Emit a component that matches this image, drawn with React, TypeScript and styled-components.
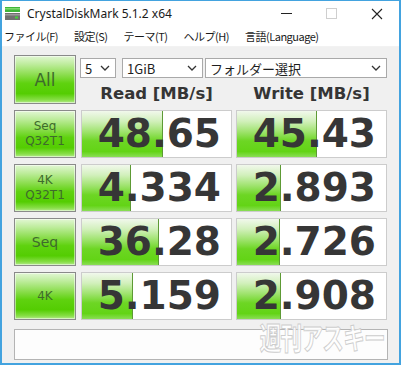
import React from 'react';
import styled, { createGlobalStyle } from 'styled-components';

const GlobalStyle = createGlobalStyle`
  html, body {
    margin: 0;
    padding: 0;
    background: #ffffff;
  }
`;

const Window = styled.div`
  position: relative;
  box-sizing: border-box;
  width: 401px;
  height: 365px;
  border: 2px solid #43a3df;
  border-top-width: 1px;
  background: #f0f0f0;
  display: flex;
  flex-direction: column;
  overflow: hidden;
`;

const TitleBar = styled.div`
  height: 25px;
  background: #ffffff;
  display: flex;
  align-items: center;
  padding-left: 2px;
  font-family: 'Noto Sans', 'Open Sans', sans-serif;
  font-size: 12px;
  color: #1a1a1a;
`;

const TitleText = styled.span`
  margin-left: 6px;
  flex: 1;
`;

const CtrlBox = styled.div`
  width: 45px;
  height: 25px;
  display: flex;
  align-items: center;
  justify-content: center;
`;

const MenuBar = styled.div`
  height: 20px;
  background: #ffffff;
  border-bottom: 1px solid #f2f2f2;
  display: flex;
  align-items: center;
  gap: 16px;
  padding-left: 2px;
  font-family: 'Noto Sans CJK JP', 'Noto Sans', sans-serif;
  font-size: 11px;
  letter-spacing: -0.5px;
  color: #1a1a1a;
`;

const Content = styled.div`
  flex: 1;
  padding: 8px 0 0 12px;
`;

const Grid = styled.div`
  display: grid;
  grid-template-columns: 63px 151px 151px;
  grid-template-rows: 49px 48px 48px 48px 48px;
  column-gap: 4px;
  row-gap: 6px;
`;

const GreenButton = styled.div<{ $size?: number }>`
  box-sizing: border-box;
  width: 62px;
  border: 1px solid #8a8a8a;
  box-shadow: inset 0 0 0 1px rgba(255, 255, 255, 0.5);
  background: linear-gradient(
    to bottom,
    #e2f7d4 0%,
    #bdec9b 18%,
    #8bdd4e 40%,
    #5fd20f 58%,
    #54cd02 80%,
    #86de45 93%,
    #b4ea8c 100%
  );
  display: flex;
  flex-direction: column;
  align-items: center;
  justify-content: center;
  font-family: 'DejaVu Sans', Verdana, sans-serif;
  font-size: ${(p) => p.$size || 12}px;
  line-height: ${(p) => (p.$size ? p.$size + 3 : 15)}px;
  color: #3e6b2c;
`;

const TopPanel = styled.div`
  grid-column: 2 / span 2;
  display: flex;
  flex-direction: column;
`;

const SelectRow = styled.div`
  display: flex;
  margin: 3px 0 0 -1px;
  height: 20px;
`;

const Select = styled.div<{ $w: number; $gap: number }>`
  box-sizing: border-box;
  width: ${(p) => p.$w}px;
  margin-right: ${(p) => p.$gap}px;
  height: 20px;
  border: 1px solid #a9a9a9;
  background: #ffffff;
  display: flex;
  align-items: center;
  justify-content: space-between;
  padding: 0 5px 0 4px;
  font-family: 'Noto Sans CJK JP', 'DejaVu Sans', sans-serif;
  font-size: 13px;
  color: #1e1e1e;
`;

const Headers = styled.div`
  display: grid;
  grid-template-columns: 151px 151px;
  column-gap: 4px;
  margin-top: 6px;
`;

const Header = styled.div`
  text-align: center;
  font-family: 'DejaVu Sans', Verdana, sans-serif;
  font-weight: bold;
  font-size: 16.5px;
  line-height: 20px;
  color: #353535;
`;

const ValueBox = styled.div`
  box-sizing: border-box;
  border: 1px solid #cccccc;
  background:
    linear-gradient(#5d9a35, #5d9a35) var(--fill) 0 / 1px 100% no-repeat,
    linear-gradient(
        to bottom,
        #f1f8ec 0%,
        #d2f0bc 22%,
        #9fe36e 45%,
        #6dd624 65%,
        #63d416 88%,
        #8ade55 100%
      )
      0 0 / var(--fill) 100% no-repeat,
    #ffffff;
  text-align: right;
  padding-right: 10px;
  font-family: 'DejaVu Sans', Verdana, sans-serif;
  font-weight: bold;
  font-size: 39px;
  line-height: 46px;
  color: #363636;
`;

const CommentBox = styled.div`
  box-sizing: border-box;
  width: 374px;
  height: 31px;
  margin-top: 9px;
  border: 1px solid #b4b4b4;
  background: #fdfdfd;
`;

const Watermark = styled.div`
  position: absolute;
  right: 14px;
  bottom: 14px;
  font-family: 'Noto Sans CJK JP', sans-serif;
  font-weight: bold;
  font-size: 30px;
  line-height: 26px;
  color: rgba(255, 255, 255, 0.9);
  -webkit-text-stroke: 1px #cdcdcd;
  transform: scaleX(0.72);
  transform-origin: right center;
  letter-spacing: -1px;
`;

const Chevron = () => (
  <svg width="10" height="6" viewBox="0 0 10 6">
    <polyline points="1,1 5,5 9,1" fill="none" stroke="#333" strokeWidth="1.3" />
  </svg>
);

const AppIcon = () => (
  <svg width="17" height="15" viewBox="0 0 17 15">
    <rect x="1" y="1" width="15" height="5" fill="#3fb53a" />
    <rect x="1" y="2" width="15" height="1.5" fill="#7fd96f" />
    <rect x="1" y="7" width="15" height="7" fill="#707070" />
    <rect x="1" y="8" width="15" height="1.5" fill="#9a9a9a" />
    <rect x="11" y="10.5" width="3" height="2" fill="#44d13a" />
  </svg>
);

type Row = { label: string[]; size?: number; read: number; write: number };

const rows: Row[] = [
  { label: ['Seq', 'Q32T1'], read: 48.65, write: 45.43 },
  { label: ['4K', 'Q32T1'], read: 4.334, write: 2.893 },
  { label: ['Seq'], size: 14, read: 36.28, write: 2.726 },
  { label: ['4K'], size: 12, read: 5.159, write: 2.908 },
];

// meter fill, log scale like the app
const fillOf = (v: number) => Math.round(151 * (0.2 * Math.log10(v) + 0.19));

const Value = ({ v, digits }: { v: number; digits: number }) => (
  <ValueBox style={{ '--fill': `${fillOf(v)}px` } as React.CSSProperties}>
    {v.toFixed(digits)}
  </ValueBox>
);

const digitsOf = (v: number) => (v >= 10 ? 2 : 3);

export default function App() {
  return (
    <>
      <GlobalStyle />
      <Window>
        <TitleBar>
          <AppIcon />
          <TitleText>CrystalDiskMark 5.1.2 x64</TitleText>
          <CtrlBox>
            <svg width="11" height="11" viewBox="0 0 11 11">
              <line x1="0" y1="5.5" x2="11" y2="5.5" stroke="#222" strokeWidth="1" />
            </svg>
          </CtrlBox>
          <CtrlBox>
            <svg width="11" height="11" viewBox="0 0 11 11">
              <rect x="0.5" y="0.5" width="10" height="10" fill="none" stroke="#cfcfcf" strokeWidth="1" />
            </svg>
          </CtrlBox>
          <CtrlBox>
            <svg width="12" height="12" viewBox="0 0 12 12">
              <path d="M1 1 L11 11 M11 1 L1 11" stroke="#222" strokeWidth="1.1" />
            </svg>
          </CtrlBox>
        </TitleBar>
        <MenuBar>
          <span>ファイル(F)</span>
          <span>設定(S)</span>
          <span>テーマ(T)</span>
          <span>ヘルプ(H)</span>
          <span>言語(Language)</span>
        </MenuBar>
        <Content>
          <Grid>
            <GreenButton $size={17}>All</GreenButton>
            <TopPanel>
              <SelectRow>
                <Select $w={36} $gap={6}>
                  5<Chevron />
                </Select>
                <Select $w={81} $gap={2}>
                  1GiB<Chevron />
                </Select>
                <Select $w={182} $gap={0}>
                  フォルダー選択<Chevron />
                </Select>
              </SelectRow>
              <Headers>
                <Header>Read [MB/s]</Header>
                <Header>Write [MB/s]</Header>
              </Headers>
            </TopPanel>
            {rows.map((r, i) => (
              <React.Fragment key={i}>
                <GreenButton $size={r.size}>
                  {r.label.map((l) => (
                    <span key={l}>{l}</span>
                  ))}
                </GreenButton>
                <Value v={r.read} digits={digitsOf(r.read)} />
                <Value v={r.write} digits={digitsOf(r.write)} />
              </React.Fragment>
            ))}
          </Grid>
          <CommentBox />
        </Content>
        <Watermark>週刊アスキー</Watermark>
      </Window>
    </>
  );
}
